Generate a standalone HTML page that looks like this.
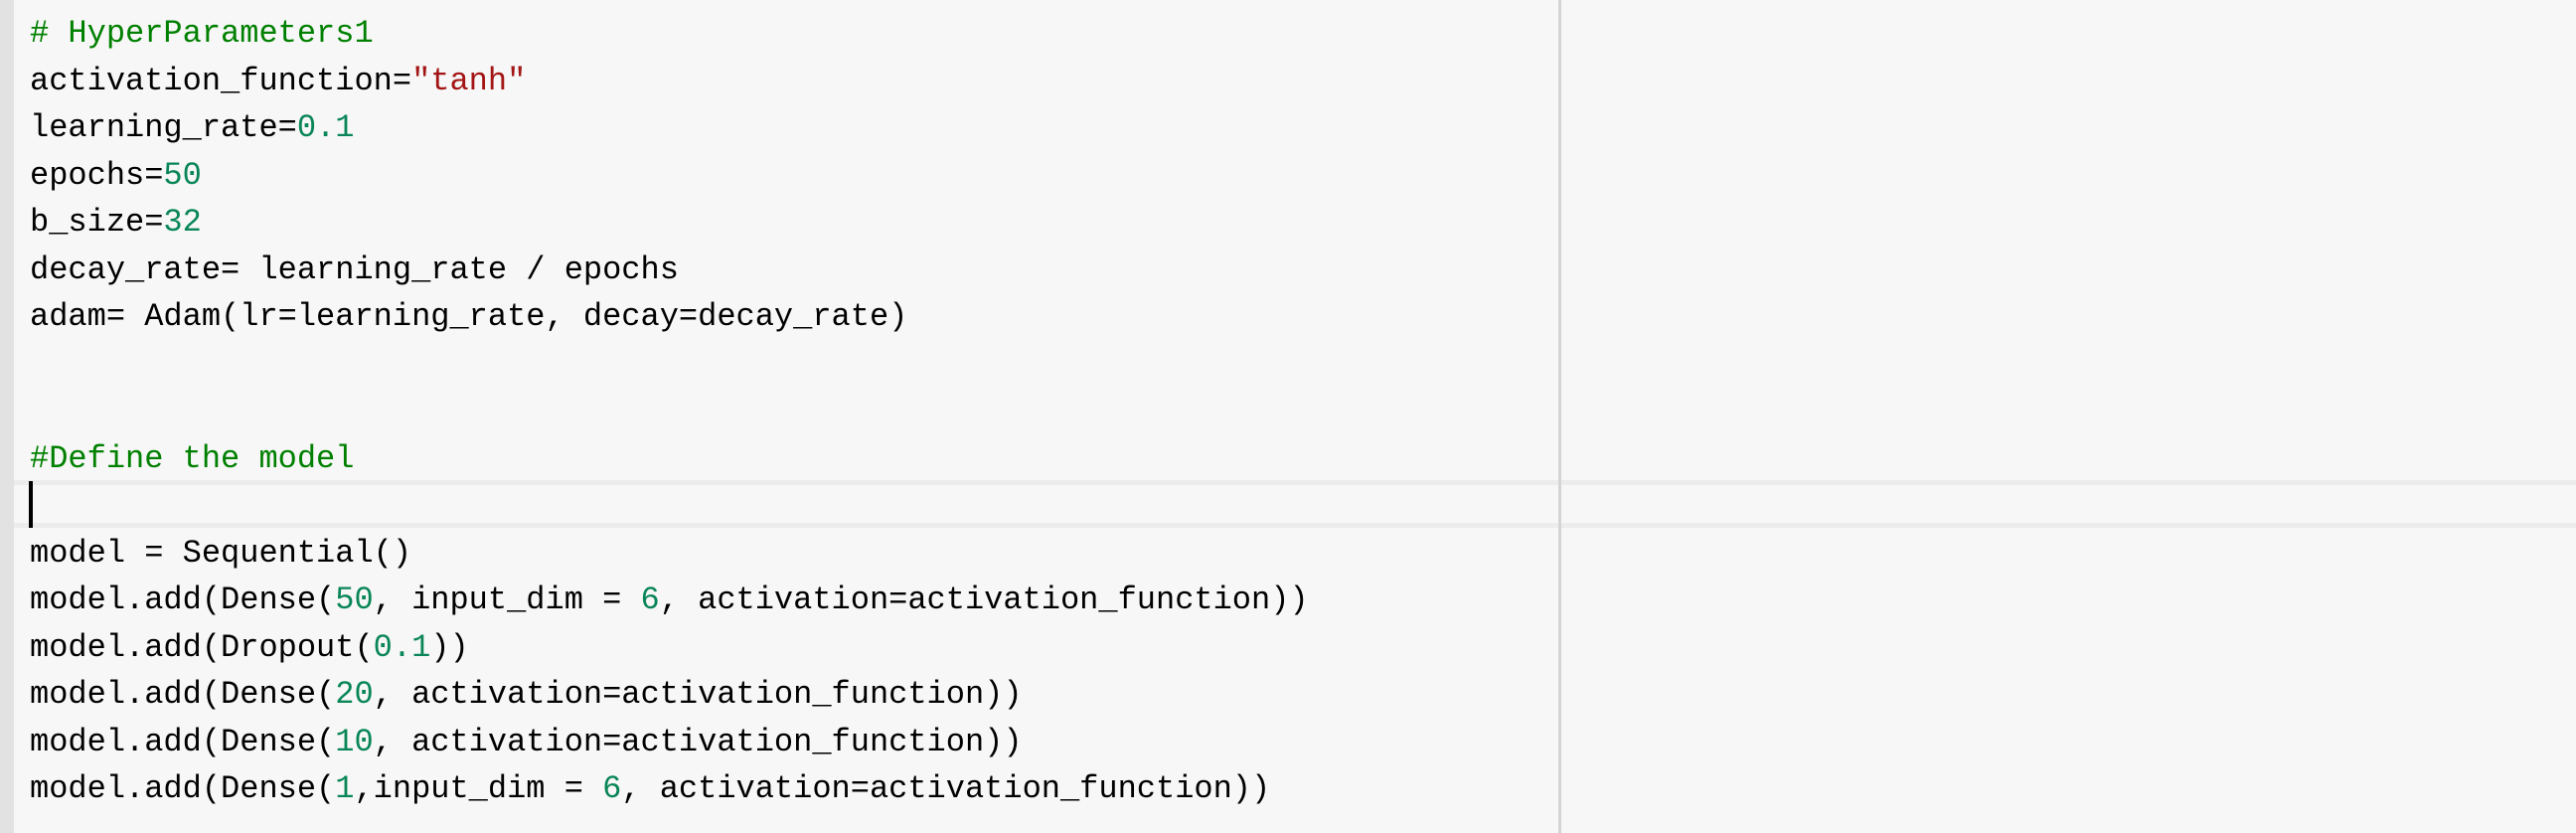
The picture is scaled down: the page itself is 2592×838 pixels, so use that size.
<!DOCTYPE html>
<html><head><meta charset="utf-8"><style>
html,body{margin:0;padding:0;}
body{width:2592px;height:838px;background:#f7f7f7;position:relative;overflow:hidden;}
.bar{position:absolute;left:0;top:0;width:14px;height:838px;background:#e2e2e2;}
.vl{position:absolute;left:1568px;top:0;width:3px;height:838px;background:#d4d4d4;}
.band{position:absolute;left:14px;right:0;height:5px;background:#ececec;}
.code{position:absolute;left:30px;top:10px;font-family:"Liberation Mono",monospace;font-size:32px;line-height:47.5px;color:#000;white-space:pre;}
.c{color:#008000}.s{color:#a31515}.n{color:#098658}
.cur{position:absolute;left:29px;top:484px;width:4px;height:47px;background:#000;}
</style></head><body>
<div class="bar"></div>
<div class="band" style="top:483px"></div>
<div class="band" style="top:526px"></div>
<div class="vl"></div>
<div class="code"><span class="c"># HyperParameters1</span>
activation_function=<span class="s">"tanh"</span>
learning_rate=<span class="n">0.1</span>
epochs=<span class="n">50</span>
b_size=<span class="n">32</span>
decay_rate= learning_rate / epochs
adam= Adam(lr=learning_rate, decay=decay_rate)


<span class="c">#Define the model</span>

model = Sequential()
model.add(Dense(<span class="n">50</span>, input_dim = <span class="n">6</span>, activation=activation_function))
model.add(Dropout(<span class="n">0.1</span>))
model.add(Dense(<span class="n">20</span>, activation=activation_function))
model.add(Dense(<span class="n">10</span>, activation=activation_function))
model.add(Dense(<span class="n">1</span>,input_dim = <span class="n">6</span>, activation=activation_function))</div>
<div class="cur"></div>
</body></html>
